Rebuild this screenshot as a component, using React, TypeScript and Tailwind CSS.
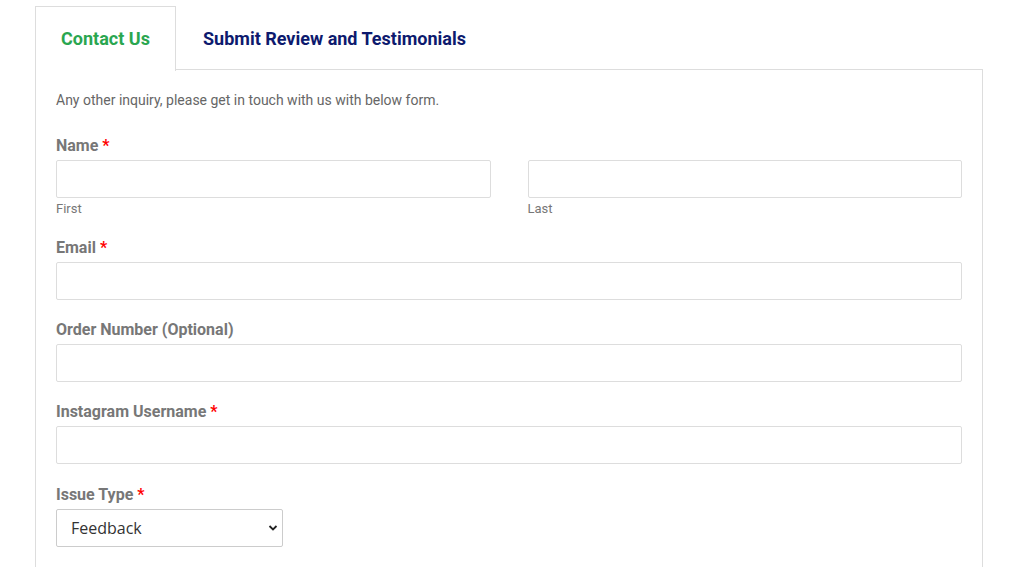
import React from "react";

const Req = () => <span className="text-[#ff0000] ml-[4px]">*</span>;

function Field({ label, required }: { label: string; required?: boolean }) {
  return (
    <div className="flex flex-col">
      <div className="text-[16px] leading-[20px] font-bold text-[#777777]">
        {label}
        {required && <Req />}
      </div>
      <input className="mt-[4px] h-[38px] w-full border border-[#dddddd] rounded-[2px] bg-white outline-none" />
    </div>
  );
}

export default function App() {
  return (
    <div className="min-h-[567px] bg-white pt-[5px] pl-[35px] pr-[41px] font-['Roboto',sans-serif]">
      <div className="flex items-end">
        <div className="w-[141px] h-[65px] pb-[2px] border border-b-0 border-[#dddddd] flex items-center justify-center text-[18px] font-bold text-[#2aa650] bg-white relative top-[1px]">
          Contact Us
        </div>
        <div className="h-[64px] pt-[1px] flex items-center pl-[27px] text-[18px] font-bold text-[#0d1a6e] flex-1 border-b border-[#dddddd]">
          Submit Review and Testimonials
        </div>
      </div>
      <div className="border border-t-0 border-[#dddddd] px-[20px] pt-[20px] pb-[40px] flex flex-col">
        <p className="text-[14px] leading-[20px] text-[#666666]">
          Any other inquiry, please get in touch with us with below form.
        </p>
        <div className="mt-[26px] flex flex-col">
          <div className="text-[16px] leading-[20px] font-bold text-[#777777]">
            Name
            <Req />
          </div>
          <div className="mt-[4px] grid grid-cols-2 gap-x-[37px]">
            <div className="flex flex-col">
              <input className="h-[38px] w-full border border-[#dddddd] rounded-[2px] bg-white outline-none" />
              <span className="mt-[2px] text-[13px] leading-[18px] text-[#777777]">First</span>
            </div>
            <div className="flex flex-col">
              <input className="h-[38px] w-full border border-[#dddddd] rounded-[2px] bg-white outline-none" />
              <span className="mt-[2px] text-[13px] leading-[18px] text-[#777777]">Last</span>
            </div>
          </div>
        </div>
        <div className="mt-[20px]">
          <Field label="Email" required />
        </div>
        <div className="mt-[20px]">
          <Field label="Order Number (Optional)" />
        </div>
        <div className="mt-[20px]">
          <Field label="Instagram Username" required />
        </div>
        <div className="mt-[21px] flex flex-col">
          <div className="text-[16px] leading-[20px] font-bold text-[#777777]">
            Issue Type
            <Req />
          </div>
          <div className="mt-[4px] relative w-[227px] h-[38px]">
            <select className="appearance-none w-full h-full border border-[#cccccc] rounded-[2px] bg-white pl-[14px] text-[16px] text-[#333333] font-['Open_Sans',sans-serif] outline-none">
              <option>Feedback</option>
            </select>
            <svg className="absolute right-[5px] top-[15px] pointer-events-none" width="10" height="8" viewBox="0 0 10 8">
              <path d="M1.5 2 L5 5.5 L8.5 2" fill="none" stroke="#222" strokeWidth="1.8" />
            </svg>
          </div>
        </div>
      </div>
    </div>
  );
}
